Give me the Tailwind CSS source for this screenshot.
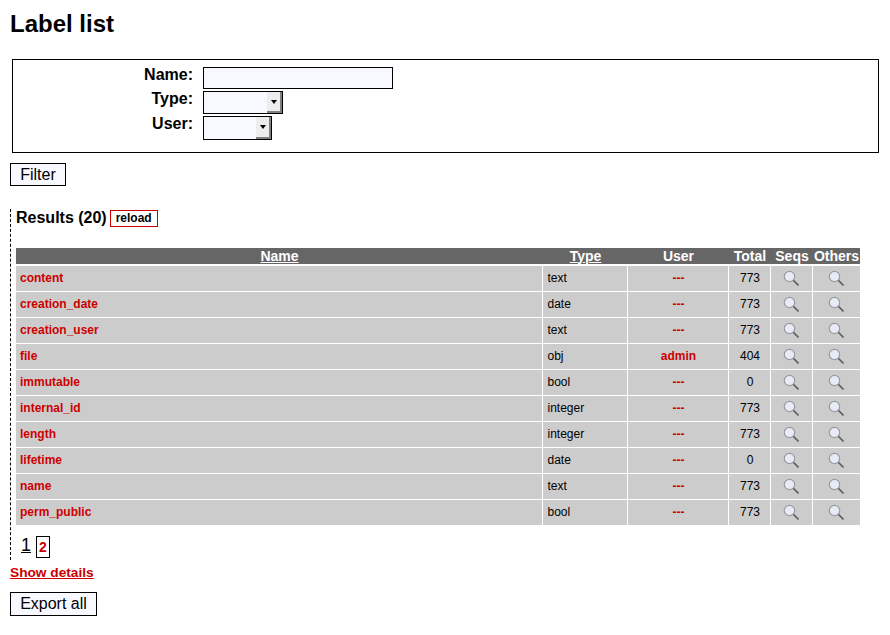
<!DOCTYPE html>
<html lang="en">
<head>
    <meta charset="UTF-8">
    <title>Label list</title>
    <script src="https://cdn.jsdelivr.net/npm/@tailwindcss/browser@4"></script>
</head>
<body class="bg-white text-black font-['Liberation_Sans',Arial,sans-serif] w-[890px] h-[635px] overflow-hidden">
    <svg class="hidden">
        <symbol id="lens" viewBox="0 0 16 16">
            <circle cx="6.5" cy="6.5" r="5.2" fill="#e6ebf5" stroke="#9a9aa0" stroke-width="1.2"/>
            <path d="M10.4 10.4 L15.5 15.5" stroke="#606065" stroke-width="1.6" fill="none"/>
        </symbol>
    </svg>
    <div class="pl-[10px] pt-[10px]">
        <h1 class="text-[24px] leading-[27px] font-bold">Label list</h1>

        <!-- Filter -->
        <form class="ml-[2px] mt-[22px] w-[867px] h-[94px] border border-black pt-[7px]">
            <div class="grid grid-cols-[180px_1fr] gap-x-[10px] gap-y-[2px]">
                <label class="text-right font-bold text-[16px] leading-[16px]">Name:</label>
                <input type="text" class="block w-[190px] h-[22px] border border-black bg-[#f8f9ff]">
                <label class="text-right font-bold text-[16px] leading-[16px]">Type:</label>
                <div class="relative w-[80px] h-[23px] border border-black bg-[#f8f9ff]">
                    <span class="absolute right-0 top-0 w-[15px] h-[21px] flex items-center justify-center bg-[#ededed] border-r-2 border-b-2 border-[#808080]">
                        <span class="w-0 h-0 border-x-[3px] border-x-transparent border-t-[4px] border-t-black"></span>
                    </span>
                </div>
                <label class="text-right font-bold text-[16px] leading-[16px]">User:</label>
                <div class="relative w-[69px] h-[24px] border border-black bg-[#f8f9ff]">
                    <span class="absolute right-0 top-0 w-[15px] h-[22px] flex items-center justify-center bg-[#ededed] border-r-2 border-b-2 border-[#808080]">
                        <span class="w-0 h-0 border-x-[3px] border-x-transparent border-t-[4px] border-t-black"></span>
                    </span>
                </div>
            </div>
        </form>
        <button class="block mt-[10px] w-[56px] h-[23px] border border-black bg-[#f8f9ff] text-[16px] leading-[20px]">Filter</button>

        <!-- Results -->
        <div class="mt-[24px] border-l border-dashed border-black pl-[5px] h-[351px]">
            <div class="flex items-center h-[18px] mt-[-1px]">
                <span class="font-bold text-[16px] leading-[18px]">Results (20)</span>
                <a class="ml-[3px] mt-[1px] border border-[#cc0000] h-[17px] w-[48px] text-center font-bold text-[12px] leading-[15px]">reload</a>
            </div>
            <table class="mt-[21px] w-[844px] table-fixed border-collapse text-[12px] text-black">
                <colgroup>
                    <col class="w-[526px]"><col class="w-[85px]"><col class="w-[101px]"><col class="w-[42px]"><col class="w-[42px]"><col class="w-[48px]">
                </colgroup>
                <thead>
                    <tr class="bg-[#666666] text-white text-[14px] font-bold h-[17px] leading-[15px]">
                        <th class="underline p-0 pl-[1px] border-b-2 border-white">Name</th>
                        <th class="underline p-0 pl-[2px] border-b-2 border-white">Type</th>
                        <th class="p-0 pl-[2px] border-b-2 border-white">User</th>
                        <th class="p-0 pl-[2px] border-b-2 border-white">Total</th>
                        <th class="p-0 pl-[2px] border-b-2 border-white">Seqs</th>
                        <th class="p-0 pl-[1px] border-b-2 border-white">Others</th>
                    </tr>
                </thead>
                <tbody class="bg-[#cccccc]">
                    <tr class="h-[26px]"><td class="pl-[4px] border-b border-white font-bold text-[#cc0000]">content</td><td class="pl-[5px] border-b border-x border-white">text</td><td class="pl-[2px] text-center border-b border-r border-white font-bold text-[#cc0000]">---</td><td class="pl-[2px] text-center border-b border-r border-white">773</td><td class="border-b border-r border-white"><svg class="block mx-auto w-[16px] h-[16px]"><use href="#lens"/></svg></td><td class="border-b border-white"><svg class="block mx-auto w-[16px] h-[16px]"><use href="#lens"/></svg></td></tr>
                    <tr class="h-[26px]"><td class="pl-[4px] border-b border-white font-bold text-[#cc0000]">creation_date</td><td class="pl-[5px] border-b border-x border-white">date</td><td class="pl-[2px] text-center border-b border-r border-white font-bold text-[#cc0000]">---</td><td class="pl-[2px] text-center border-b border-r border-white">773</td><td class="border-b border-r border-white"><svg class="block mx-auto w-[16px] h-[16px]"><use href="#lens"/></svg></td><td class="border-b border-white"><svg class="block mx-auto w-[16px] h-[16px]"><use href="#lens"/></svg></td></tr>
                    <tr class="h-[26px]"><td class="pl-[4px] border-b border-white font-bold text-[#cc0000]">creation_user</td><td class="pl-[5px] border-b border-x border-white">text</td><td class="pl-[2px] text-center border-b border-r border-white font-bold text-[#cc0000]">---</td><td class="pl-[2px] text-center border-b border-r border-white">773</td><td class="border-b border-r border-white"><svg class="block mx-auto w-[16px] h-[16px]"><use href="#lens"/></svg></td><td class="border-b border-white"><svg class="block mx-auto w-[16px] h-[16px]"><use href="#lens"/></svg></td></tr>
                    <tr class="h-[26px]"><td class="pl-[4px] border-b border-white font-bold text-[#cc0000]">file</td><td class="pl-[5px] border-b border-x border-white">obj</td><td class="pl-[2px] text-center border-b border-r border-white font-bold text-[#cc0000]">admin</td><td class="pl-[2px] text-center border-b border-r border-white">404</td><td class="border-b border-r border-white"><svg class="block mx-auto w-[16px] h-[16px]"><use href="#lens"/></svg></td><td class="border-b border-white"><svg class="block mx-auto w-[16px] h-[16px]"><use href="#lens"/></svg></td></tr>
                    <tr class="h-[26px]"><td class="pl-[4px] border-b border-white font-bold text-[#cc0000]">immutable</td><td class="pl-[5px] border-b border-x border-white">bool</td><td class="pl-[2px] text-center border-b border-r border-white font-bold text-[#cc0000]">---</td><td class="pl-[2px] text-center border-b border-r border-white">0</td><td class="border-b border-r border-white"><svg class="block mx-auto w-[16px] h-[16px]"><use href="#lens"/></svg></td><td class="border-b border-white"><svg class="block mx-auto w-[16px] h-[16px]"><use href="#lens"/></svg></td></tr>
                    <tr class="h-[26px]"><td class="pl-[4px] border-b border-white font-bold text-[#cc0000]">internal_id</td><td class="pl-[5px] border-b border-x border-white">integer</td><td class="pl-[2px] text-center border-b border-r border-white font-bold text-[#cc0000]">---</td><td class="pl-[2px] text-center border-b border-r border-white">773</td><td class="border-b border-r border-white"><svg class="block mx-auto w-[16px] h-[16px]"><use href="#lens"/></svg></td><td class="border-b border-white"><svg class="block mx-auto w-[16px] h-[16px]"><use href="#lens"/></svg></td></tr>
                    <tr class="h-[26px]"><td class="pl-[4px] border-b border-white font-bold text-[#cc0000]">length</td><td class="pl-[5px] border-b border-x border-white">integer</td><td class="pl-[2px] text-center border-b border-r border-white font-bold text-[#cc0000]">---</td><td class="pl-[2px] text-center border-b border-r border-white">773</td><td class="border-b border-r border-white"><svg class="block mx-auto w-[16px] h-[16px]"><use href="#lens"/></svg></td><td class="border-b border-white"><svg class="block mx-auto w-[16px] h-[16px]"><use href="#lens"/></svg></td></tr>
                    <tr class="h-[26px]"><td class="pl-[4px] border-b border-white font-bold text-[#cc0000]">lifetime</td><td class="pl-[5px] border-b border-x border-white">date</td><td class="pl-[2px] text-center border-b border-r border-white font-bold text-[#cc0000]">---</td><td class="pl-[2px] text-center border-b border-r border-white">0</td><td class="border-b border-r border-white"><svg class="block mx-auto w-[16px] h-[16px]"><use href="#lens"/></svg></td><td class="border-b border-white"><svg class="block mx-auto w-[16px] h-[16px]"><use href="#lens"/></svg></td></tr>
                    <tr class="h-[26px]"><td class="pl-[4px] border-b border-white font-bold text-[#cc0000]">name</td><td class="pl-[5px] border-b border-x border-white">text</td><td class="pl-[2px] text-center border-b border-r border-white font-bold text-[#cc0000]">---</td><td class="pl-[2px] text-center border-b border-r border-white">773</td><td class="border-b border-r border-white"><svg class="block mx-auto w-[16px] h-[16px]"><use href="#lens"/></svg></td><td class="border-b border-white"><svg class="block mx-auto w-[16px] h-[16px]"><use href="#lens"/></svg></td></tr>
                    <tr class="h-[26px]"><td class="pl-[4px] font-bold text-[#cc0000]">perm_public</td><td class="pl-[5px] border-x border-white">bool</td><td class="pl-[2px] text-center border-r border-white font-bold text-[#cc0000]">---</td><td class="pl-[2px] text-center border-r border-white">773</td><td class="border-r border-white"><svg class="block mx-auto w-[16px] h-[16px]"><use href="#lens"/></svg></td><td><svg class="block mx-auto w-[16px] h-[16px]"><use href="#lens"/></svg></td></tr>
                </tbody>
            </table>
            <div class="flex items-start mt-[10px]">
                <span class="text-[18px] leading-[20px] underline ml-[5px] w-[11px]">1</span>
                <a class="ml-[4px] mt-[1px] border border-black w-[14px] h-[22px] text-center font-bold text-[14px] leading-[20px] text-[#cc0000]">2</a>
            </div>
        </div>
        <a class="block mt-[3px] font-bold text-[13.7px] leading-[20px] underline text-[#cc0000]">Show details</a>
        <button class="block mt-[9px] w-[87px] h-[24px] border border-black bg-[#f8f9ff] text-[16px] leading-[20px]">Export all</button>
    </div>
</body>
</html>
